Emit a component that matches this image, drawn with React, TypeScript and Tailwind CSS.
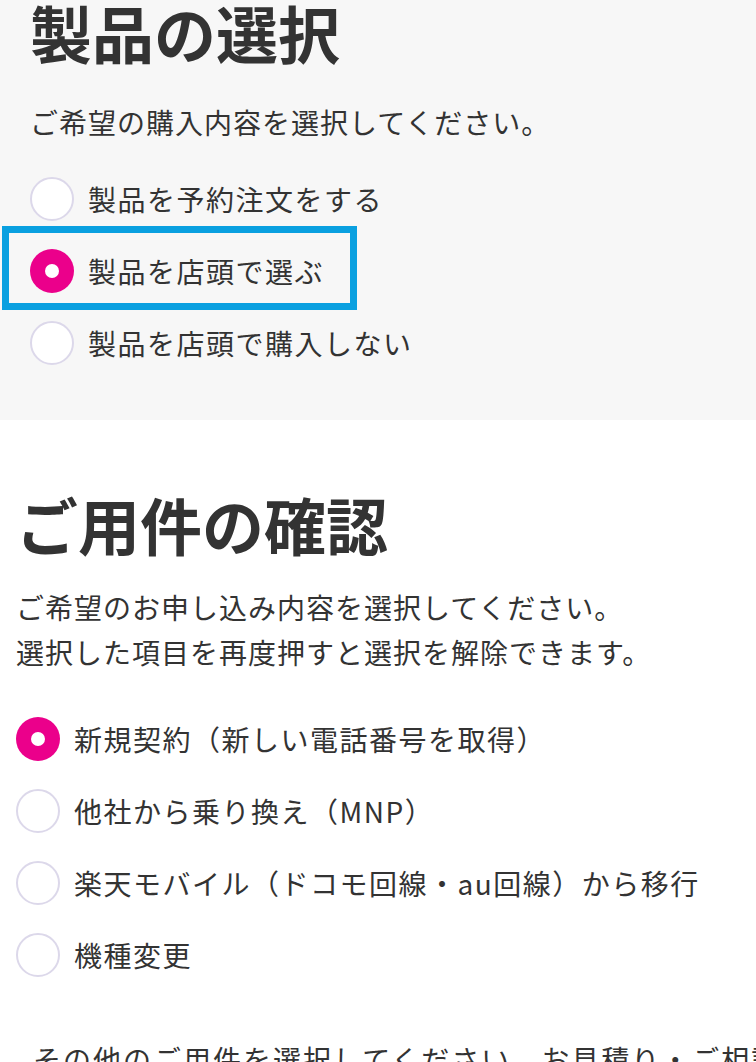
import { useState } from "react";

const font = { fontFamily: '"Noto Sans CJK JP", "Noto Sans", sans-serif' };

function Radio({ checked }: { checked: boolean }) {
  return checked ? (
    <span className="flex h-[44px] w-[44px] shrink-0 items-center justify-center rounded-full bg-[#eb008b]">
      <span className="h-[14px] w-[14px] rounded-full bg-white" />
    </span>
  ) : (
    <span className="h-[44px] w-[44px] shrink-0 rounded-full border-2 border-[#dcd8ea] bg-white" />
  );
}

function Option({
  label,
  checked,
  onClick,
}: {
  label: string;
  checked: boolean;
  onClick: () => void;
}) {
  return (
    <button
      type="button"
      onClick={onClick}
      className="flex h-[72px] items-center gap-[14px] text-left text-[28px] tracking-[1.5px] text-[#333]"
    >
      <Radio checked={checked} />
      <span>{label}</span>
    </button>
  );
}

const products = ["製品を予約注文をする", "製品を店頭で選ぶ", "製品を店頭で購入しない"];
const purposes = [
  "新規契約（新しい電話番号を取得）",
  "他社から乗り換え（MNP）",
  "楽天モバイル（ドコモ回線・au回線）から移行",
  "機種変更",
];

export default function App() {
  const [product, setProduct] = useState(1);
  const [purpose, setPurpose] = useState<number | null>(0);

  return (
    <div className="h-[1062px] overflow-hidden bg-white text-[#333]" style={font}>
      {/* ─── 製品の選択 ─── */}
      <section className="h-[420px] bg-[#f7f7f7] pl-[30px]">
        <h2 className="pt-[1px] text-[62px] font-bold leading-none">製品の選択</h2>
        <p className="mt-[39px] text-[28px] leading-[40px] tracking-[1px]">
          ご希望の購入内容を選択してください。
        </p>
        <div className="mt-[21px] flex flex-col">
          {products.map((p, i) => (
            <div key={p} className="relative">
              <Option label={p} checked={product === i} onClick={() => setProduct(i)} />
              {i === 1 && (
                <div className="pointer-events-none absolute left-[-28px] top-[-9px] h-[84px] w-[355px] border-[7px] border-[#0aa0e0]" />
              )}
            </div>
          ))}
        </div>
      </section>

      {/* ─── ご用件の確認 ─── */}
      <section className="pl-[16px] pt-[73px]">
        <h2 className="text-[62px] font-bold leading-none">ご用件の確認</h2>
        <p className="mt-[30px] text-[28px] leading-[45px] tracking-[1px]">
          ご希望のお申し込み内容を選択してください。
          <br />
          選択した項目を再度押すと選択を解除できます。
        </p>
        <div className="mt-[28px] flex flex-col">
          {purposes.map((p, i) => (
            <Option
              key={p}
              label={p}
              checked={purpose === i}
              onClick={() => setPurpose(purpose === i ? null : i)}
            />
          ))}
        </div>
        <p className="mt-[48px] whitespace-nowrap pl-[17px] text-[28px] leading-[40px] tracking-[2px]">
          その他のご用件を選択してください。お見積り・ご相談
        </p>
      </section>
    </div>
  );
}
